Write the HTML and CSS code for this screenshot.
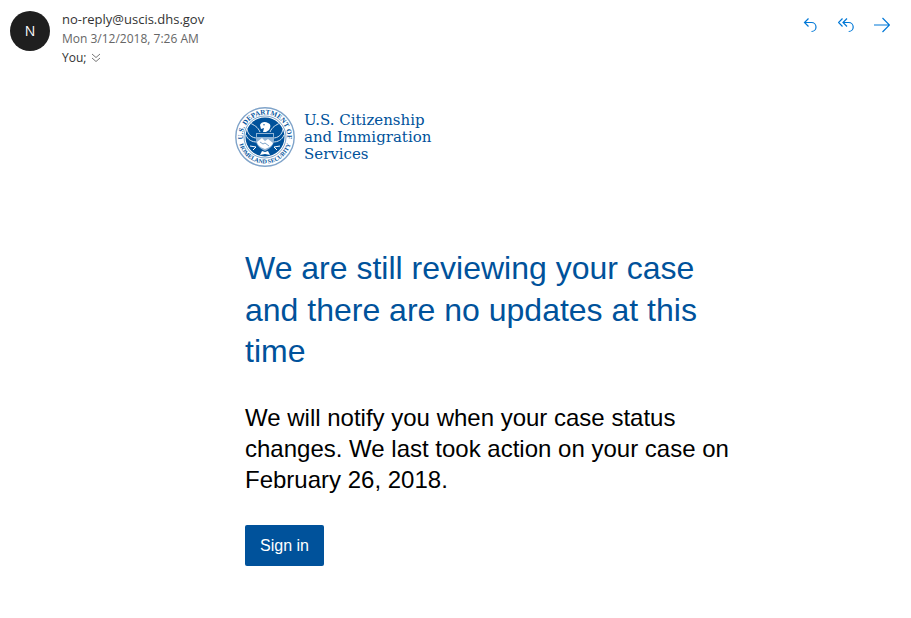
FILE: index.html
```html
<!DOCTYPE html>
<html lang="en">
<head>
  <meta charset="UTF-8" />
  <meta name="viewport" content="width=device-width, initial-scale=1.0"/>
  <title>Case update</title>
  <link rel="stylesheet" href="styles.css">
</head>
<body>
  <header class="mail-header">
    <div class="avatar">N</div>
    <div class="mail-info">
      <div class="sender">no-reply@uscis.dhs.gov</div>
      <div class="date">Mon 3/12/2018, 7:26 AM</div>
      <div class="recipients">
        <span>You;</span>
        <button class="expand-btn" type="button" aria-label="Show recipients">
          <svg width="10" height="10" viewBox="0 0 10 10"><path d="M1 1l4 3.5L9 1M1 5l4 3.5L9 5"/></svg>
        </button>
      </div>
    </div>
    <div class="mail-actions">
      <button class="action-btn" type="button" aria-label="Reply">
        <svg width="16" height="16" viewBox="0 0 16 16"><path d="M6.5 1.5l-4 4 4 4M2.5 5.5h7a4.3 4.3 0 0 1 0 9"/></svg>
      </button>
      <button class="action-btn" type="button" aria-label="Reply all">
        <svg width="16" height="16" viewBox="0 0 16 16"><path d="M4.5 1.5l-4 4 4 4M9 1.5l-4 4 4 4M5 5.5h5.7a4.3 4.3 0 0 1 0 9"/></svg>
      </button>
      <button class="action-btn" type="button" aria-label="Forward">
        <svg width="16" height="16" viewBox="0 0 16 16"><path d="M0 8h15.5M8.5 1l7 7-7 7"/></svg>
      </button>
    </div>
  </header>

  <main class="mail-body">
    <div class="message">
      <div class="logo">
        <svg class="seal" width="60" height="60" viewBox="0 0 60 60" role="img" aria-label="Department of Homeland Security seal">
          <defs>
            <path id="top-arc" d="M8.2 34.5A22.3 22.3 0 1 1 51.8 34.5"/>
            <path id="bottom-arc" d="M3.4 30A26.6 26.6 0 0 0 56.6 30"/>
            <clipPath id="disc"><circle cx="30" cy="30" r="19.5"/></clipPath>
          </defs>
          <circle cx="30" cy="30" r="29.2" fill="#fff" stroke="#7fa3c9" stroke-width="1.4"/>
          <circle cx="30" cy="30" r="21" fill="#fff" stroke="#5d8dbb" stroke-width="0.8"/>
          <circle cx="30" cy="30" r="19.5" fill="#00529b"/>
          <g clip-path="url(#disc)">
            <!-- wings -->
            <g fill="none" stroke="#d5e3f0" stroke-width="1">
              <path d="M12 22c1 6 5 9 10 9M11 28c2 5 6 7 11 7"/>
              <path d="M48 22c-1 6-5 9-10 9M49 28c-2 5-6 7-11 7"/>
              <path d="M15 16c4 2 8 4 10 9M45 16c-4 2-8 4-10 9"/>
            </g>
            <!-- head -->
            <path fill="#fff" d="M25 18c1-3 5-4 8-2 3 1 3 4 1 7l-3 2h-3l1-4-3 1z"/>
            <circle cx="29" cy="17.8" r="0.7" fill="#00529b"/>
            <!-- shield -->
            <path fill="#8fb3d5" d="M21 26h18v7c0 6-5 9-9 11-4-2-9-5-9-11z"/>
            <path fill="#00529b" d="M22 27h16v3H22z"/>
            <path fill="#fff" d="M22 35l5-4 3 3 3-2 5 4c-1 3-5 5-8 6-3-1-7-3-8-7z"/>
            <path fill="none" stroke="#5d8dbb" stroke-width="0.8" d="M25 35l3 2 2-1 4 3"/>
            <!-- tail and talons -->
            <path fill="#fff" d="M27 44l3 1 3-1 2 4-5-1-5 1z"/>
            <path fill="none" stroke="#fff" stroke-width="1" d="M15 39l6 1-3 3M45 39l-6 1 3 3"/>
          </g>
          <g class="seal-text">
            <text class="seal-top"><textPath href="#top-arc" startOffset="50%">U.S. DEPARTMENT OF</textPath></text>
            <text><textPath href="#bottom-arc" startOffset="50%">HOMELAND SECURITY</textPath></text>
          </g>
        </svg>
        <div class="logo-text">U.S. Citizenship<br>and Immigration<br>Services</div>
      </div>

      <div class="content">
        <h1>We are still reviewing your case and there are no updates at this time</h1>
        <p>We will notify you when your case status changes. We last took action on your case on February 26, 2018.</p>
        <a class="sign-in" href="#">Sign in</a>
      </div>
    </div>
  </main>
</body>
</html>
```

FILE: styles.css
```css
* {
  box-sizing: border-box;
}

body {
  margin: 0;
  background: #fff;
  font-family: "Liberation Sans", Arial, sans-serif;
}

button {
  padding: 0;
  border: 0;
  background: none;
  cursor: pointer;
}

svg {
  display: block;
}

.mail-header {
  display: flex;
  align-items: flex-start;
  padding: 10px 21px 0 10px;
  font-family: "Open Sans", "Noto Sans", sans-serif;
}

.avatar {
  width: 40px;
  height: 40px;
  margin-top: 1px;
  border-radius: 50%;
  background: #1f1f1f;
  color: #fff;
  font-size: 14px;
  line-height: 40px;
  text-align: center;
}

.mail-info {
  flex: 1;
  margin-left: 12px;
  color: #333;
  font-size: 12px;
  line-height: 19px;
}

.sender {
  font-size: 13px;
}

.date {
  color: #666;
}

.recipients {
  display: flex;
  align-items: center;
  gap: 5px;
}

.expand-btn svg {
  fill: none;
  stroke: #777;
  stroke-width: 1;
}

.mail-actions {
  display: flex;
  gap: 20px;
  padding-top: 7px;
}

.action-btn svg {
  fill: none;
  stroke: #0078d7;
  stroke-width: 1.2;
}

.mail-body {
  padding: 40px 0 52px 60px;
}

.message {
  max-width: 501px;
  margin: 0 auto;
}

.logo {
  display: flex;
  align-items: center;
  gap: 9px;
}

.seal-text {
  fill: #00529b;
  font-family: "Liberation Serif", serif;
  font-size: 6px;
  font-weight: bold;
  text-anchor: middle;
}

.seal-top {
  font-size: 7px;
}

.logo-text {
  color: #00529b;
  font-family: "DejaVu Serif", serif;
  font-size: 15px;
  line-height: 17px;
}

.content {
  padding: 81px 0 0 10px;
}

h1 {
  margin: 0 0 29px;
  color: #00529b;
  font-size: 32px;
  font-weight: normal;
  line-height: 1.3;
}

p {
  margin: 0 0 30px;
  color: #000;
  font-size: 24px;
  line-height: 1.3;
}

.sign-in {
  display: inline-block;
  padding: 0 15px;
  border-radius: 2px;
  background: #00529b;
  color: #fff;
  font-size: 16px;
  line-height: 41px;
  text-decoration: none;
}
```
